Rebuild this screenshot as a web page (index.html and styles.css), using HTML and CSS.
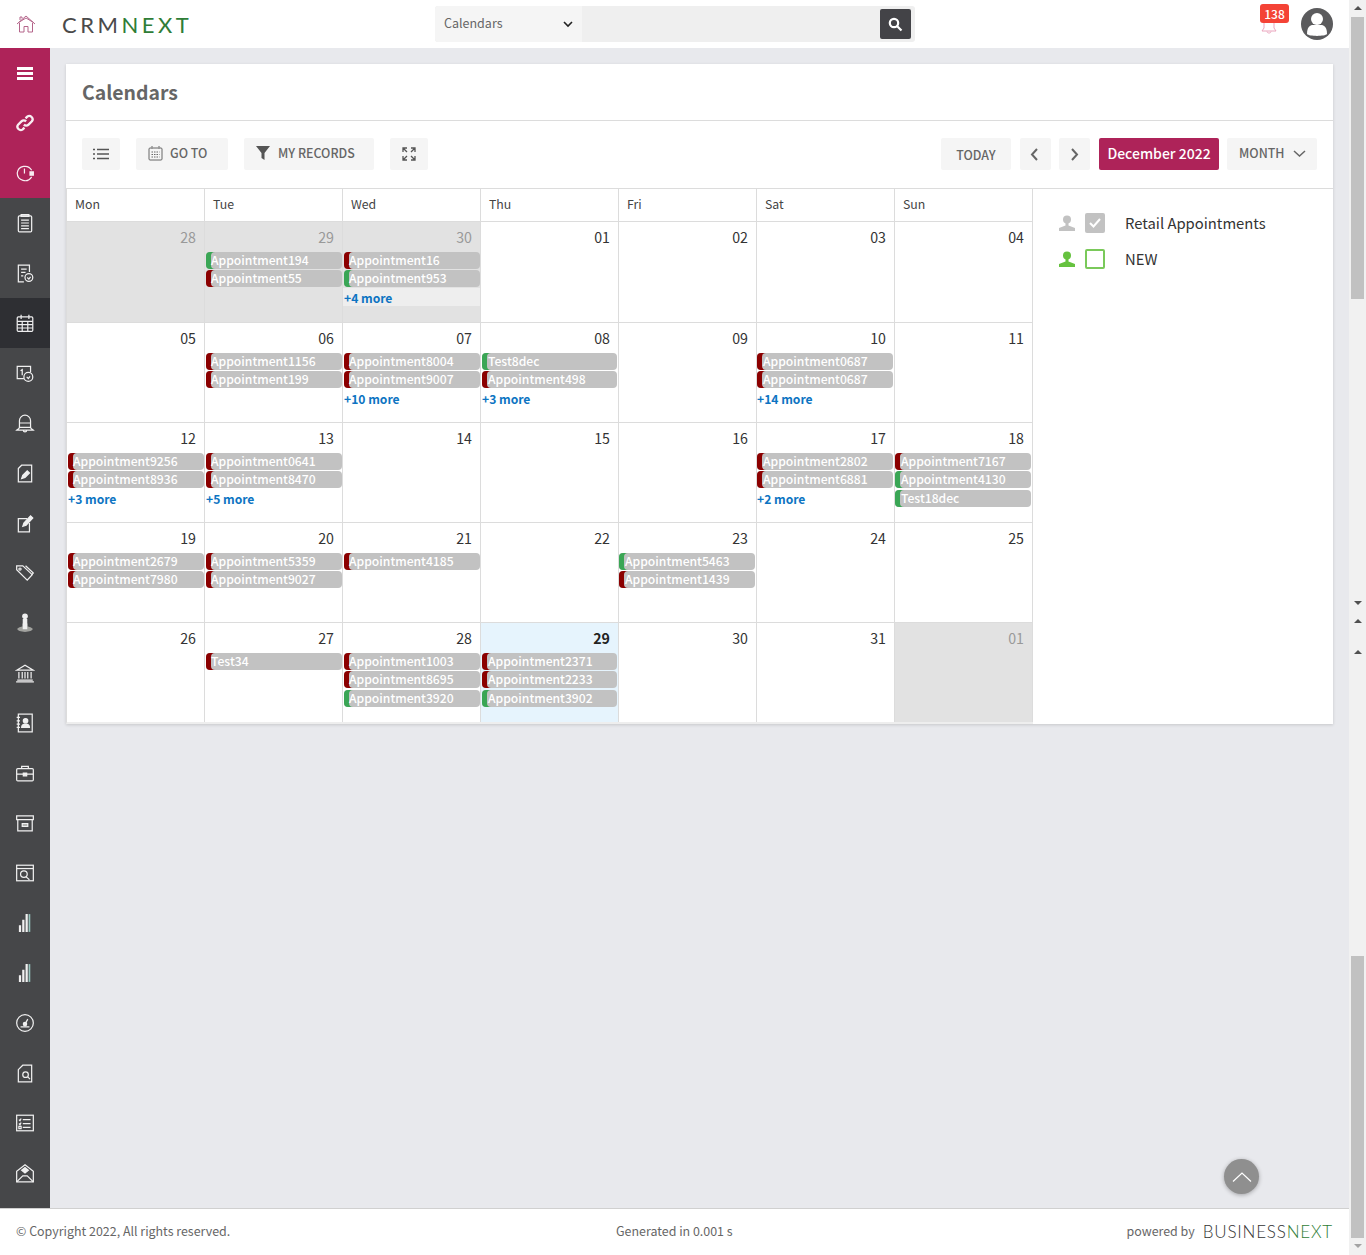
FILE: index.html
```html
<!DOCTYPE html>
<html lang="en">
<head>
  <meta charset="UTF-8">
  <meta name="viewport" content="width=device-width, initial-scale=1.0">
  <title>Calendars</title>
  <link rel="stylesheet" href="styles.css">
</head>
<body>
  <div class="page">
    <div class="page-main">
      <header class="topbar">
        <a class="home-link" href="#">
          <svg width="20" height="20" viewBox="0 0 20 20" fill="none" stroke="#b4648a" stroke-width="1"><path d="M1 10 10 2l9 8"/><path d="M2.500 8.500 10 4l7.500 4.500"/><path d="M3.500 9V18h4.500v-5.500h4V18h4.500V9"/><path d="M4 6V3h2v1.500"/></svg>
        </a>
        <div class="logo">CRM<span class="logo-next">NEXT</span></div>
        <div class="search">
          <div class="search-select">
            <span>Calendars</span>
            <svg width="10" height="7" viewBox="0 0 10 7" fill="none" stroke="#222" stroke-width="1.600"><path d="M1 1l4 4 4-4"/></svg>
          </div>
          <div class="search-input">
            <button class="search-btn">
              <svg width="15" height="15" viewBox="0 0 15 15" fill="none" stroke="#fff" stroke-width="2.200"><circle cx="6" cy="6" r="4.200"/><path d="M9.200 9.200 13.500 13.500"/></svg>
            </button>
          </div>
        </div>
        <div class="notify">
          <svg class="notify-bell" width="16" height="14" viewBox="0 0 16 14" fill="none" stroke="#eba6be" stroke-width="1"><path d="M3 1v7l-2 3h14l-2-3V1"/><path d="M6 11.500c0 2 4 2 4 0"/></svg>
          <span class="notify-count">138</span>
        </div>
        <div class="avatar">
          <svg width="32" height="32" viewBox="0 0 32 32"><circle cx="16" cy="16" r="16" fill="#5b5b5d"/><circle cx="16" cy="11" r="6" fill="#fff"/><path d="M6 26c0-7 3-9 6-9h8c3 0 6 2 6 9-2 2.500-18 2.500-20 0z" fill="#fff"/></svg>
        </div>
      </header>

      <div class="middle">
        <nav class="sidebar">
          <a class="side-item brand" href="#"><svg width="16" height="13" viewBox="0 0 16 13" fill="#fff"><rect width="16" height="3"/><rect y="5" width="16" height="3"/><rect y="10" width="16" height="3"/></svg></a>
          <a class="side-item brand" href="#"><svg class="side-icon side-icon-bold" viewBox="0 0 18 18"><path d="M8 10.500a3 3 0 0 0 4.200 0l3-3a3 3 0 0 0-4.200-4.200L9.500 4.800"/><path d="M10 7.500a3 3 0 0 0-4.200 0l-3 3a3 3 0 0 0 4.200 4.200l1.500-1.500"/></svg></a>
          <a class="side-item brand" href="#"><svg class="side-icon" viewBox="0 0 18 18"><path d="M15 6.500A7 7 0 0 0 2 9a7 7 0 0 0 13 3.500"/><path d="M8.500 5v4.500"/><path d="M13.500 8h3v3h-3z" fill="#fff"/></svg></a>
          <a class="side-item" href="#"><svg class="side-icon" viewBox="0 0 18 18"><rect x="3" y="2.500" width="12" height="14.500" rx="1"/><path d="M5.500 1.500h7V3h-7zM5.500 6.500h7M5.500 9h7M5.500 11.500h7M5.500 14h7"/></svg></a>
          <a class="side-item" href="#"><svg class="side-icon" viewBox="0 0 18 18"><path d="M8 17H3V2h10v6"/><path d="M5.500 5.500h5M5.500 8.500h4M5.500 11.500h2"/><circle cx="12.500" cy="13" r="3.500"/><path d="M11 13l1.500 1.500L14 12.500"/></svg></a>
          <a class="side-item active" href="#"><svg class="side-icon" viewBox="0 0 18 18"><rect x="2" y="3.500" width="14" height="13" rx="1"/><path d="M5.500 1.500v4M12.500 1.500v4M2 7.500h14M2 10.500h14M2 13.500h14M6.500 7.500v9M11.500 7.500v9"/></svg></a>
          <a class="side-item" href="#"><svg class="side-icon" viewBox="0 0 18 18"><path d="M8 14H2V3h12v5"/><path d="M5 7l1.500-1V11"/><circle cx="12" cy="12.500" r="4"/><path d="M10.500 12.500l1.500 1.500 1.500-2"/></svg></a>
          <a class="side-item" href="#"><svg class="side-icon" viewBox="0 0 18 18"><path d="M4 13V7a5 5 0 0 1 10 0v6"/><path d="M1.500 15.500c1-1 2.500-1.500 2.500-2.500h10c0 1 1.500 1.500 2.500 2.500zM4 9h10M7.500 15.500c0 2 3 2 3 0"/></svg></a>
          <a class="side-item" href="#"><svg class="side-icon" viewBox="0 0 18 18"><path d="M3 5l3-3h9v15H3z"/><path d="M6 14l1-3 4-4 2 2-4 4z" fill="#fff"/></svg></a>
          <a class="side-item" href="#"><svg class="side-icon" viewBox="0 0 18 18"><path d="M11 5H3v12h10V9"/><path d="M7 12l1-3 6-6.500 2 2L10 11z" fill="#fff"/></svg></a>
          <a class="side-item" href="#"><svg class="side-icon" viewBox="0 0 18 18"><path d="M1.500 6V2.500H7l8.500 8-4.500 5z"/><path d="M9.500 2.500l7 6.500-1.500 1.500"/><circle cx="4.500" cy="5.500" r="1"/></svg></a>
          <a class="side-item" href="#"><svg class="side-icon" viewBox="0 0 18 18"><circle cx="9" cy="3" r="2" fill="#fff"/><path d="M7.500 6h3v8h-3z" fill="#fff"/><ellipse cx="9" cy="14.500" rx="7" ry="2.500" fill="#a9aaa6" stroke="none"/><path d="M7.500 10h3v4h-3z" fill="#fff"/></svg></a>
          <a class="side-item" href="#"><svg class="side-icon" viewBox="0 0 18 18"><path d="M1.500 6.500 9 2l7.500 4.500zM2 15.500h14M1 17h16"/><path d="M3.500 8v6M6.500 8v6M9 8v6M11.500 8v6M14.500 8v6"/></svg></a>
          <a class="side-item" href="#"><svg class="side-icon" viewBox="0 0 18 18"><rect x="3" y="1" width="12.500" height="16"/><path d="M1.500 4h3M1.500 7h3M1.500 10h3M1.500 13h3"/><circle cx="9.500" cy="7" r="2" fill="#fff"/><path d="M6 13c0-4 7-4 7 0z" fill="#fff"/></svg></a>
          <a class="side-item" href="#"><svg class="side-icon" viewBox="0 0 18 18"><rect x="1.500" y="5" width="15" height="11" rx="1"/><path d="M6 5V3h6v2M1.500 10h15"/><path d="M7.500 9h3v2.500h-3z" fill="#fff"/></svg></a>
          <a class="side-item" href="#"><svg class="side-icon" viewBox="0 0 18 18"><path d="M1.500 2.500h15V6h-15zM2.500 6v10h13V6"/><path d="M6.500 9.500h5v2.500h-5z" fill="#a9aaa6"/></svg></a>
          <a class="side-item" href="#"><svg class="side-icon" viewBox="0 0 18 18"><rect x="1.500" y="2" width="15" height="14"/><path d="M1.500 5h15"/><circle cx="8" cy="10" r="3"/><path d="M10 12.500l3 2.500"/></svg></a>
          <a class="side-item" href="#"><svg class="side-icon" viewBox="0 0 18 18"><path d="M4.500 17v-6M7.500 17V6M10.500 17V1" stroke-width="2"/><path d="M13 17V1" stroke="#9fd0c8" stroke-width="1.500"/></svg></a>
          <a class="side-item" href="#"><svg class="side-icon" viewBox="0 0 18 18"><path d="M4.500 17v-6M7.500 17V6M10.500 17V1" stroke-width="2"/><path d="M13 17V1" stroke="#9fd0c8" stroke-width="1.500"/></svg></a>
          <a class="side-item" href="#"><svg class="side-icon" viewBox="0 0 18 18"><circle cx="9" cy="9" r="7.500"/><path d="M9 10l2.500-4.500M5 12.500h8"/><circle cx="9" cy="10" r="1.500" fill="#fff"/></svg></a>
          <a class="side-item" href="#"><svg class="side-icon" viewBox="0 0 18 18"><path d="M3 6l4-4h8v15H3z"/><circle cx="9.500" cy="10.500" r="2.500"/><path d="M11.500 12.500l2 2"/></svg></a>
          <a class="side-item" href="#"><svg class="side-icon" viewBox="0 0 18 18"><rect x="1.500" y="2" width="15" height="14"/><path d="M7 6h7M7 9.500h7M7 13h7M3.500 6l1 1 1-2M3.500 9.500l1 1 1-2M3.500 12h2v2h-2z"/></svg></a>
          <a class="side-item" href="#"><svg class="side-icon" viewBox="0 0 18 18"><path d="M1.500 7.500V17h15V7.500L9 1.500z"/><path d="M1.500 17 7 11.500h4l5.500 5.500"/><path d="M6 6.500 9 4l3 2.500L9 9z" fill="#fff"/></svg></a>
        </nav>

        <main class="content">
          <section class="card">
            <h1 class="card-title">Calendars</h1>
            <div class="toolbar">
              <button class="btn btn-icon">
                <svg width="16" height="12" viewBox="0 0 16 12" fill="none" stroke="#555" stroke-width="1.500"><path d="M0 1.500h2M4 1.500h12M0 6h2M4 6h12M0 10.500h2M4 10.500h12"/></svg>
              </button>
              <button class="btn btn-goto">
                <svg width="15" height="15" viewBox="0 0 15 15" fill="none" stroke="#666"><rect x="1" y="2" width="13" height="12" rx="1"/><path d="M4 0v3M11 0v3M3.500 6h8M3.500 8.500h8M3.500 11h8" stroke-dasharray="1.500 1"/></svg>
                GO TO
              </button>
              <button class="btn btn-records">
                <svg width="14" height="14" viewBox="0 0 14 14" fill="#555"><path d="M0 0h14L8.500 7v7l-3-2V7z"/></svg>
                MY RECORDS
              </button>
              <button class="btn btn-icon">
                <svg width="14" height="14" viewBox="0 0 14 14" fill="none" stroke="#555" stroke-width="1.300"><path d="M1 5V1h4M1 1l4 4M13 5V1H9M13 1 9 5M1 9v4h4M1 13l4-4M13 9v4H9M13 13 9 9"/></svg>
              </button>
              <div class="toolbar-right">
                <button class="btn btn-today">TODAY</button>
                <button class="btn btn-nav btn-prev">
                  <svg width="8" height="13" viewBox="0 0 8 13" fill="none" stroke="#666" stroke-width="2"><path d="M7 1 2 6.500 7 12"/></svg>
                </button>
                <button class="btn btn-nav btn-next">
                  <svg width="8" height="13" viewBox="0 0 8 13" fill="none" stroke="#666" stroke-width="2"><path d="M1 1l5 5.500L1 12"/></svg>
                </button>
                <div class="month-label">December 2022</div>
                <button class="btn btn-month">
                  MONTH
                  <svg width="13" height="7" viewBox="0 0 13 7" fill="none" stroke="#666" stroke-width="1.500"><path d="M1 1l5.500 5L12 1"/></svg>
                </button>
              </div>
            </div>

            <div class="cal-body">
              <div class="calendar">
                <div class="week-head">
                  <div>Mon</div><div>Tue</div><div>Wed</div><div>Thu</div><div>Fri</div><div>Sat</div><div>Sun</div>
                </div>

                <div class="week week-first">
                  <div class="day muted"><div class="num">28</div></div>
                  <div class="day muted"><div class="num">29</div>
                    <div class="event green">Appointment194</div>
                    <div class="event red">Appointment55</div>
                  </div>
                  <div class="day muted"><div class="num">30</div>
                    <div class="event red">Appointment16</div>
                    <div class="event green">Appointment953</div>
                    <a class="more more-hover" href="#">+4 more</a>
                  </div>
                  <div class="day"><div class="num">01</div></div>
                  <div class="day"><div class="num">02</div></div>
                  <div class="day"><div class="num">03</div></div>
                  <div class="day"><div class="num">04</div></div>
                </div>

                <div class="week">
                  <div class="day"><div class="num">05</div></div>
                  <div class="day"><div class="num">06</div>
                    <div class="event red">Appointment1156</div>
                    <div class="event red">Appointment199</div>
                  </div>
                  <div class="day"><div class="num">07</div>
                    <div class="event red">Appointment8004</div>
                    <div class="event red">Appointment9007</div>
                    <a class="more" href="#">+10 more</a>
                  </div>
                  <div class="day"><div class="num">08</div>
                    <div class="event green">Test8dec</div>
                    <div class="event red">Appointment498</div>
                    <a class="more" href="#">+3 more</a>
                  </div>
                  <div class="day"><div class="num">09</div></div>
                  <div class="day"><div class="num">10</div>
                    <div class="event red">Appointment0687</div>
                    <div class="event red">Appointment0687</div>
                    <a class="more" href="#">+14 more</a>
                  </div>
                  <div class="day"><div class="num">11</div></div>
                </div>

                <div class="week">
                  <div class="day"><div class="num">12</div>
                    <div class="event red">Appointment9256</div>
                    <div class="event red">Appointment8936</div>
                    <a class="more" href="#">+3 more</a>
                  </div>
                  <div class="day"><div class="num">13</div>
                    <div class="event red">Appointment0641</div>
                    <div class="event red">Appointment8470</div>
                    <a class="more" href="#">+5 more</a>
                  </div>
                  <div class="day"><div class="num">14</div></div>
                  <div class="day"><div class="num">15</div></div>
                  <div class="day"><div class="num">16</div></div>
                  <div class="day"><div class="num">17</div>
                    <div class="event red">Appointment2802</div>
                    <div class="event red">Appointment6881</div>
                    <a class="more" href="#">+2 more</a>
                  </div>
                  <div class="day"><div class="num">18</div>
                    <div class="event red">Appointment7167</div>
                    <div class="event green">Appointment4130</div>
                    <div class="event green">Test18dec</div>
                  </div>
                </div>

                <div class="week">
                  <div class="day"><div class="num">19</div>
                    <div class="event red">Appointment2679</div>
                    <div class="event red">Appointment7980</div>
                  </div>
                  <div class="day"><div class="num">20</div>
                    <div class="event red">Appointment5359</div>
                    <div class="event red">Appointment9027</div>
                  </div>
                  <div class="day"><div class="num">21</div>
                    <div class="event red">Appointment4185</div>
                  </div>
                  <div class="day"><div class="num">22</div></div>
                  <div class="day"><div class="num">23</div>
                    <div class="event green">Appointment5463</div>
                    <div class="event red">Appointment1439</div>
                  </div>
                  <div class="day"><div class="num">24</div></div>
                  <div class="day"><div class="num">25</div></div>
                </div>

                <div class="week week-last">
                  <div class="day"><div class="num">26</div></div>
                  <div class="day"><div class="num">27</div>
                    <div class="event red">Test34</div>
                  </div>
                  <div class="day"><div class="num">28</div>
                    <div class="event red">Appointment1003</div>
                    <div class="event red">Appointment8695</div>
                    <div class="event green">Appointment3920</div>
                  </div>
                  <div class="day today"><div class="num">29</div>
                    <div class="event red">Appointment2371</div>
                    <div class="event red">Appointment2233</div>
                    <div class="event green">Appointment3902</div>
                  </div>
                  <div class="day"><div class="num">30</div></div>
                  <div class="day"><div class="num">31</div></div>
                  <div class="day muted"><div class="num">01</div></div>
                </div>
              </div>

              <aside class="legend">
                <div class="legend-row">
                  <svg width="16" height="16" viewBox="0 0 16 16" fill="#c2c2c2"><circle cx="8" cy="4.500" r="4"/><path d="M6.500 8h3v2.500L16 13v3H0v-3l6.500-2.500z"/></svg>
                  <span class="check check-on">
                    <svg width="12" height="10" viewBox="0 0 12 10" fill="none" stroke="#fff" stroke-width="2"><path d="M1 5l3.500 3.500L11 1"/></svg>
                  </span>
                  <span class="legend-name">Retail Appointments</span>
                </div>
                <div class="legend-row">
                  <svg width="16" height="16" viewBox="0 0 16 16" fill="#66c23f"><circle cx="8" cy="4.500" r="4"/><path d="M6.500 8h3v2.500L16 13v3H0v-3l6.500-2.500z"/></svg>
                  <span class="check check-off"></span>
                  <span class="legend-name">NEW</span>
                </div>
              </aside>
            </div>
          </section>

          <a class="go-top" href="#">
            <svg width="20" height="10" viewBox="0 0 20 10" fill="none" stroke="#fff" stroke-width="1.200"><path d="M1 9.500 10 1l9 8.500"/></svg>
          </a>
        </main>
      </div>

      <footer class="footer">
        <div class="footer-copy">© Copyright 2022, All rights reserved.</div>
        <div class="footer-time">Generated in 0.001 s</div>
        <div class="footer-power">powered by <span class="bn-logo">BUSINESS<span class="bn-next">NEXT</span></span></div>
      </footer>
    </div>

    <div class="scrollbar">
      <div class="sb-track sb-track-top">
        <span class="sb-arrow up"></span>
        <div class="sb-thumb"></div>
        <span class="sb-arrow down"></span>
      </div>
      <div class="sb-track sb-track-mid">
        <span class="sb-arrow up"></span>
      </div>
      <div class="sb-track sb-track-low">
        <span class="sb-arrow up"></span>
        <div class="sb-thumb sb-thumb-low"></div>
        <span class="sb-arrow down"></span>
      </div>
    </div>
  </div>
</body>
</html>
```

FILE: styles.css
```css
html, body {
  margin: 0;
  height: 100%;
  overflow: hidden;
}
body {
  font-family: "Noto Sans CJK JP", "Noto Sans", sans-serif;
  font-size: 12.4px;
  color: #333;
}
a {
  text-decoration: none;
}
button {
  font-family: inherit;
  border: none;
  cursor: pointer;
}
.page {
  display: flex;
  height: 1255px;
}
.page-main {
  width: 1349px;
  display: flex;
  flex-direction: column;
}

/* top bar */
.topbar {
  height: 48px;
  background-color: #fff;
  display: flex;
  align-items: center;
  flex-shrink: 0;
}
.home-link {
  display: flex;
  margin-left: 16px;
}
.logo {
  font-family: "Lato", sans-serif;
  font-weight: 400;
  font-size: 22px;
  letter-spacing: 3.5px;
  color: #4a4a4a;
  margin-left: 26px;
  width: 373px;
}
.logo-next {
  color: #2f7d37;
}
.search {
  width: 480px;
  height: 36px;
  background-color: #efefef;
  border-radius: 3px;
  display: flex;
}
.search-select {
  width: 147px;
  padding: 0 9px 4px;
  box-sizing: border-box;
  background-color: #f5f5f5;
  border-radius: 3px 0 0 3px;
  display: flex;
  align-items: center;
  justify-content: space-between;
  color: #666;
  font-size: 12.5px;
}
.search-select svg {
  margin-top: 4px;
}
.search-input {
  flex: 1;
  display: flex;
  justify-content: flex-end;
  align-items: center;
  padding-right: 4px;
}
.search-btn {
  width: 31px;
  height: 30px;
  background-color: #434347;
  border-radius: 2px;
  display: flex;
  align-items: center;
  justify-content: center;
  padding: 0;
}
.notify {
  position: relative;
  margin-left: 345px;
  width: 29px;
  height: 48px;
}
.notify-bell {
  position: absolute;
  left: 1px;
  top: 20px;
}
.notify-count {
  position: absolute;
  left: 0;
  top: 4px;
  width: 29px;
  height: 19px;
  line-height: 19px;
  text-align: center;
  background-color: #f44336;
  color: #fff;
  font-size: 12px;
  font-weight: 500;
  border-radius: 3px;
}
.avatar {
  margin-left: 12px;
  display: flex;
}

/* middle */
.middle {
  flex: 1;
  display: flex;
  min-height: 0;
}
.sidebar {
  width: 50px;
  background-color: #464749;
  flex-shrink: 0;
  display: flex;
  flex-direction: column;
}
.side-item {
  height: 50px;
  display: flex;
  align-items: center;
  justify-content: center;
  flex-shrink: 0;
}
.side-item.brand {
  background-color: #ae2359;
}
.side-item.active {
  background-color: #2e2f33;
}
.side-icon {
  width: 20px;
  height: 20px;
  fill: none;
  stroke: #fff;
  stroke-width: 1.100;
  opacity: 0.92;
}
.side-icon-bold {
  stroke-width: 2.100;
}
.content {
  flex: 1;
  background-color: #e8e9ed;
  padding: 16px;
  position: relative;
  min-width: 0;
}

/* card */
.card {
  background-color: #fff;
  box-shadow: 0 1px 3px rgba(0, 0, 0, 0.15);
  height: 660px;
}
.card-title {
  margin: 0;
  height: 56px;
  padding-left: 16px;
  line-height: 55px;
  font-size: 19.4px;
  font-weight: 700;
  color: #666;
  border-bottom: 1px solid #dcdcdc;
  box-sizing: content-box;
}
.toolbar {
  height: 67px;
  box-sizing: border-box;
  padding: 17px 16px 0;
  display: flex;
  align-items: flex-start;
  gap: 16px;
}
.toolbar-right {
  margin-left: auto;
  display: flex;
  gap: 8px;
}
.btn {
  height: 32px;
  background-color: #f5f5f5;
  color: #666;
  font-size: 12.4px;
  font-weight: 500;
  border-radius: 2px;
  padding: 0;
  display: flex;
  align-items: center;
  justify-content: center;
}
.btn-icon {
  width: 38px;
}
.btn-goto {
  width: 92px;
  gap: 7px;
  justify-content: flex-start;
  padding: 0 0 2px 12px;
}
.btn-records {
  width: 130px;
  gap: 8px;
  justify-content: flex-start;
  padding: 0 0 2px 12px;
}
.btn-today {
  width: 70px;
  margin-right: 1px;
  padding-top: 1px;
}
.btn-nav {
  width: 31px;
}
.btn-prev svg {
  margin-right: 3px;
}
.btn-next {
  margin-right: 1px;
}
.month-label {
  width: 120px;
  height: 32px;
  line-height: 30px;
  text-align: center;
  background-color: #ae2359;
  color: #fff;
  font-size: 14px;
  font-weight: 500;
  border-radius: 2px;
}
.btn-month {
  width: 90px;
  gap: 9px;
  justify-content: flex-start;
  padding: 0 0 2px 12px;
}

/* calendar */
.cal-body {
  display: flex;
  border-top: 1px solid #dcdcdc;
}
.calendar {
  width: 966px;
  border-left: 1px solid #dcdcdc;
  border-bottom: 2px solid #eee;
  flex-shrink: 0;
}
.week-head, .week {
  display: grid;
  grid-template-columns: repeat(7, 138px);
}
.week-head > div {
  height: 33px;
  line-height: 31px;
  padding-left: 8px;
  box-sizing: border-box;
  border-right: 1px solid #dcdcdc;
  border-bottom: 1px solid #dcdcdc;
  color: #444;
  font-size: 12.3px;
}
.week {
  height: 100px;
}
.week-first {
  height: 101px;
}
.week-last {
  height: 99px;
}
.day {
  border-right: 1px solid #dcdcdc;
  border-bottom: 1px solid #dcdcdc;
  box-sizing: border-box;
  min-width: 0;
}
.week-last .day {
  border-bottom: none;
}
.num {
  height: 30px;
  line-height: 31px;
  text-align: right;
  padding-right: 8px;
  font-size: 14.2px;
  color: #333;
}
.day.muted {
  background-color: #e2e2e2;
}
.day.muted .num {
  color: #999;
}
.day.today {
  background-color: #e6f4fd;
}
.day.today .num {
  font-weight: 700;
  color: #222;
}
.event {
  height: 17px;
  line-height: 16px;
  margin: 0 0 1px 1px;
  width: 136px;
  box-sizing: border-box;
  padding-left: 5px;
  border-radius: 4px;
  background-color: #c2c2c2;
  color: #fff;
  font-size: 12.15px;
  font-weight: 500;
  white-space: nowrap;
  overflow: hidden;
}
.day:nth-child(4) .event {
  width: 135px;
  padding-left: 6px;
}
.day:nth-child(n+5) .event {
  margin-left: 0;
  padding-left: 6px;
}
.event + .event + .event {
  margin-top: 2px;
}
.event.red {
  box-shadow: inset 5px 0 0 #8b0000;
}
.event.green {
  box-shadow: inset 5px 0 0 #3aa655;
}
.more {
  display: block;
  height: 18px;
  line-height: 19px;
  margin-top: 1px;
  padding-left: 1px;
  color: #0d74c2;
  font-size: 12.1px;
  font-weight: 700;
}
.day:nth-child(n+5) .more {
  padding-left: 0;
}
.more-hover {
  background-color: #eee;
}

/* legend */
.legend {
  flex: 1;
  padding: 24px 0 0 26px;
}
.legend-row {
  display: flex;
  align-items: center;
  height: 20px;
  margin-bottom: 16px;
}
.check {
  width: 20px;
  height: 20px;
  box-sizing: border-box;
  border-radius: 2px;
  margin-left: 10px;
  display: flex;
  align-items: center;
  justify-content: center;
}
.check-on {
  background-color: #c2c2c2;
}
.check-off {
  border: 2px solid #7ac95a;
}
.legend-name {
  margin-left: 20px;
  padding-bottom: 2px;
  font-size: 14.8px;
  color: #333;
}

/* go to top */
.go-top {
  position: absolute;
  left: 1174px;
  top: 1111px;
  width: 35px;
  height: 35px;
  border-radius: 50%;
  background-color: #8f8f8f;
  box-shadow: 0 1px 4px rgba(0, 0, 0, 0.3);
  display: flex;
  align-items: center;
  justify-content: center;
}

/* footer */
.footer {
  height: 47px;
  box-sizing: border-box;
  background-color: #fff;
  border-top: 1px solid #d0d0d0;
  display: flex;
  align-items: center;
  padding: 0 16px 2px;
  color: #666;
  font-size: 12.45px;
  flex-shrink: 0;
}
.footer-copy {
  width: 600px;
  flex-shrink: 0;
}
.footer-power {
  white-space: nowrap;
  margin-left: auto;
  display: flex;
  align-items: center;
  gap: 8px;
}
.bn-logo {
  font-family: "Lato", sans-serif;
  font-size: 17px;
  font-weight: 300;
  letter-spacing: 0.8px;
  color: #333;
}
.bn-next {
  color: #2f7d37;
}

/* page scrollbars */
.scrollbar {
  width: 17px;
  background-color: #f1f1f1;
  display: flex;
  flex-direction: column;
}
.sb-track {
  display: flex;
  flex-direction: column;
  align-items: center;
}
.sb-track-top {
  height: 612px;
}
.sb-track-mid {
  height: 32px;
}
.sb-track-mid .sb-arrow {
  margin-top: 7px;
}
.sb-track-low {
  flex: 1;
}
.sb-thumb {
  width: 13px;
  height: 282px;
  background-color: #c1c1c1;
}
.sb-thumb-low {
  margin-top: auto;
}
.sb-arrow {
  width: 0;
  height: 0;
  border-left: 4px solid transparent;
  border-right: 4px solid transparent;
  margin: 6px 0 7px;
}
.sb-arrow.up {
  border-bottom: 4px solid #505050;
}
.sb-arrow.down {
  border-top: 4px solid #505050;
  margin-top: auto;
}
.sb-thumb-low + .sb-arrow.down {
  margin-top: 6px;
  border-top-color: #a3a3a3;
}
```
